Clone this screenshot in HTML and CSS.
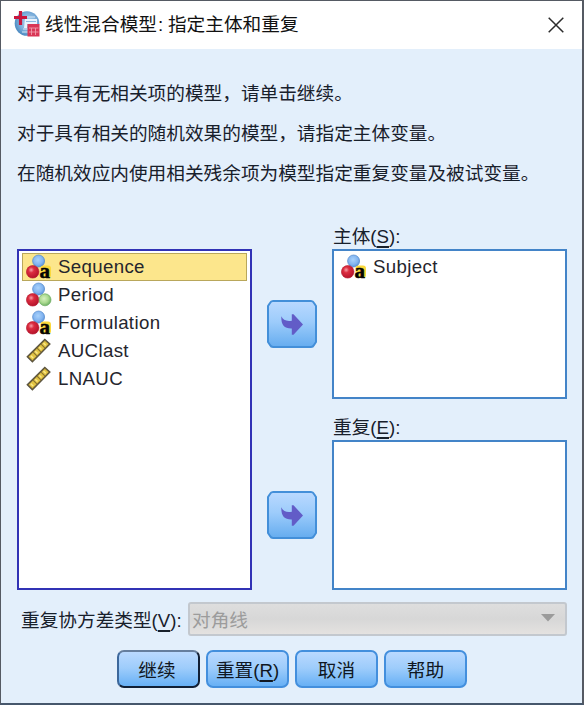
FILE: index.html
```html
<!DOCTYPE html>
<html lang="zh-CN">
<head>
<meta charset="utf-8">
<title>线性混合模型: 指定主体和重复</title>
<link rel="stylesheet" href="styles.css">
</head>
<body>
<svg class="defs" width="0" height="0" aria-hidden="true">
  <defs>
    <radialGradient id="blue" cx=".45" cy=".4" r=".6"><stop offset="0" stop-color="#a9d2fb"/><stop offset=".65" stop-color="#83b5f0"/><stop offset="1" stop-color="#5b94dc"/></radialGradient>
    <radialGradient id="red" cx=".38" cy=".35" r=".65"><stop offset="0" stop-color="#f5a0a8"/><stop offset=".35" stop-color="#dc2c40"/><stop offset="1" stop-color="#b5142b"/></radialGradient>
    <radialGradient id="green" cx=".42" cy=".4" r=".6"><stop offset="0" stop-color="#d7f1c0"/><stop offset=".6" stop-color="#aad98f"/><stop offset="1" stop-color="#6fb064"/></radialGradient>
    <radialGradient id="globe" cx=".55" cy=".45" r=".6"><stop offset="0" stop-color="#b5d5ef"/><stop offset=".6" stop-color="#7caedb"/><stop offset="1" stop-color="#4484bc"/></radialGradient>
    <symbol id="balls" viewBox="0 0 26 26">
      <circle cx="12.6" cy="7" r="6" fill="url(#blue)" stroke="#5389cc" stroke-width=".7"/>
      <circle cx="6.7" cy="17.8" r="6.3" fill="url(#red)" stroke="#b5162b" stroke-width=".6"/>
    </symbol>
    <symbol id="string" viewBox="0 0 26 26">
      <use href="#balls" width="26" height="26"/>
      <rect x="14.5" y="11.5" width="10.5" height="12.5" rx="3" fill="#fbd83b"/>
      <text x="13.6" y="24" class="glyph-a">a</text>
    </symbol>
    <symbol id="nominal" viewBox="0 0 26 26">
      <use href="#balls" width="26" height="26"/>
      <circle cx="19" cy="17.8" r="6" fill="url(#green)" stroke="#6dac60" stroke-width=".7"/>
    </symbol>
    <symbol id="scale" viewBox="0 0 26 26">
      <path d="M1.2 18.8 18.8 1.4 24 6 6.4 23.8Z" fill="#8a7330" stroke="#5b543f" stroke-width="1.2"/>
      <path d="M2.8 18.8 6.9 14.7 10.4 18.2 6.4 22.2ZM7.7 13.9 10.9 10.7 14.4 14.2 11.2 17.4ZM11.7 9.9 14.9 6.7 18.4 10.2 15.2 13.4ZM15.7 5.9 18.9 2.9 22.4 6.1 19.2 9.4Z" fill="#e3c544"/>
      <path d="M4.8 17.7l2.4 2.4M9.3 13.2l2.2 2.2M13.3 9.2l2.2 2.2M17.5 5l2.2 2.2" stroke="#fae98c" stroke-width="1.4"/>
    </symbol>
    <linearGradient id="face" x2="0" y2="1"><stop offset="0" stop-color="#bad9ff"/><stop offset=".45" stop-color="#9dccfb"/><stop offset="1" stop-color="#65acef"/></linearGradient>
    <symbol id="move" viewBox="0 0 50 48">
      <path d="M6 1H44Q46 1 47 3L49 6V42L47 45Q46 47 44 47H6Q4 47 3 45L1 42V6L3 3Q4 1 6 1Z" fill="url(#face)" stroke="#438fd9" stroke-width="2" stroke-linejoin="round"/>
      <path d="M14.3 16.3C16 20.2 19.3 21.5 24.8 20.7V14.3H26.5L36 24.5 26.5 34.8H24.8V28.5C17.6 28.7 14 25.5 14.3 16.3Z" fill="#625cc7"/>
    </symbol>
  </defs>
</svg>
<div class="window">
  <header class="titlebar">
    <svg class="app-icon" viewBox="0 0 28 28">
      <circle cx="14" cy="13.5" r="12.3" fill="url(#globe)"/>
      <path d="M12 7h10M10 19h5M9 22h6" stroke="#d5e7f6" stroke-width="1.2"/>
      <path d="M12 9h12v5H14v4h-3Z" fill="#e9f3fc"/>
      <path d="M13 11.5h10" stroke="#8bb8df" stroke-width="1"/>
      <path d="M7.5 1V15M1 7.5H14" stroke="#c9153d" stroke-width="3.2"/>
      <path d="M14.5 14H26.5V26.5H14.5Z" fill="#d93655"/>
      <path d="M16 18h9.500M16 22h9.500M18.500 18v7M22.500 18v7" stroke="#f09bac" stroke-width=".9"/>
    </svg>
    <h1 class="title">线性混合模型<span class="colon">:</span>指定主体和重复</h1>
    <svg class="close" viewBox="0 0 16 16"><path d="M.7.7 15.3 15.3M15.3.7.7 15.3" stroke="#2b2b2b" stroke-width="1.5"/></svg>
  </header>
  <main class="content">
    <div class="messages">
      <p>对于具有无相关项的模型，请单击继续。</p>
      <p>对于具有相关的随机效果的模型，请指定主体变量。</p>
      <p>在随机效应内使用相关残余项为模型指定重复变量及被试变量。</p>
    </div>
    <div class="picker">
      <ul class="box source">
        <li class="row selected"><svg><use href="#string"/></svg>Sequence</li>
        <li class="row"><svg><use href="#nominal"/></svg>Period</li>
        <li class="row"><svg><use href="#string"/></svg>Formulation</li>
        <li class="row"><svg><use href="#scale"/></svg>AUClast</li>
        <li class="row"><svg><use href="#scale"/></svg>LNAUC</li>
      </ul>
      <div class="targets">
        <div class="target">
          <svg class="move"><use href="#move"/></svg>
          <div class="field">
            <div class="label">主体(<u>S</u>):</div>
            <ul class="box"><li class="row"><svg><use href="#string"/></svg>Subject</li></ul>
          </div>
        </div>
        <div class="target">
          <svg class="move"><use href="#move"/></svg>
          <div class="field">
            <div class="label">重复(<u>E</u>):</div>
            <ul class="box"></ul>
          </div>
        </div>
      </div>
    </div>
    <div class="covariance">
      <div class="label">重复协方差类型(<u>V</u>):</div>
      <div class="combo"><span>对角线</span><svg viewBox="0 0 14 8"><path d="M0 0H14L7 7.5Z" fill="#9b9b9b"/></svg></div>
    </div>
    <div class="buttons">
      <div class="button default"><span>继续</span></div>
      <div class="button"><span>重置(<u>R</u>)</span></div>
      <div class="button"><span>取消</span></div>
      <div class="button"><span>帮助</span></div>
    </div>
  </main>
</div>
</body>
</html>
```
FILE: styles.css
```css
* { box-sizing: border-box; }
body { margin: 0; font: 18.67px/28px "Liberation Sans", "Noto Sans CJK SC", sans-serif; color: #18202b; }
h1, p, ul { margin: 0; padding: 0; }
ul { list-style: none; }
svg { display: block; flex: none; }
.defs { position: absolute; }
.window { width: 584px; height: 705px; border: 1px solid #555a63; border-right-width: 2px; border-bottom: 2px solid #46576c; background: #e3effb; overflow: hidden; }
.titlebar { display: flex; align-items: center; height: 48px; padding: 0 18px 0 12px; background: #fff; }
.app-icon { width: 28px; height: 28px; margin-top: -2px; }
.title { flex: 1; margin-left: 4px; font-size: 18.67px; font-weight: 400; color: #111; white-space: nowrap; }
.colon { display: inline-block; width: 11px; padding-left: 1px; }
.close { width: 16px; height: 16px; }
.content { padding: 0 15px 0 16px; }
.messages { padding-top: 31px; height: 176px; white-space: nowrap; }
.messages p { height: 40px; }
.picker { display: flex; gap: 15px; align-items: flex-end; height: 365px; }
.box { border: 2px solid #4384c8; background: #fff; padding: 2px 3px; }
.source { flex: none; width: 235px; height: 341px; border-color: #3132b5; }
.row { display: flex; align-items: center; height: 28px; padding-left: 3px; gap: 6px; letter-spacing: .35px; border: 1px solid transparent; color: #25252d; }
.row svg { width: 26px; height: 26px; }
.selected { background: #fce68c; border-color: #b9a75b; }
.glyph-a { font: bold 21px "Liberation Serif", serif; fill: #050505; stroke: #050505; stroke-width: .5px; letter-spacing: 0; }
.targets { display: flex; flex: none; flex-direction: column; gap: 17px; height: 365px; }
.target { display: flex; gap: 15px; height: 174px; }
.move { width: 50px; height: 48px; margin-top: 75px; }
.field { width: 235px; }
.field .label { height: 24px; line-height: 24px; padding-left: 1px; }
.field .box { height: 150px; }
.label { white-space: nowrap; }
.label u, .button u { text-decoration-thickness: 1.5px; text-underline-offset: 3px; }
.covariance { display: flex; align-items: center; justify-content: space-between; height: 34px; margin-top: 12px; padding-left: 4px; }
.covariance .label { padding-top: 3px; }
.combo { display: flex; align-items: center; justify-content: space-between; width: 379px; height: 34px; padding: 3px 10px 0 2px; border: 2px solid #c3c8ce; border-radius: 3px; background: linear-gradient(#dedede, #d7d7d7 50%, #e4e2e0); color: #9c9c9c; }
.combo svg { width: 14px; height: 8px; margin-top: -6px; }
.buttons { display: flex; gap: 6px; margin: 14px 0 0 100px; }
.button { display: flex; justify-content: center; align-items: center; width: 83px; height: 38px; padding-top: 4px; border: 2px solid #438fdd; border-radius: 7px; background: linear-gradient(#bad9ff, #9dccfb 48%, #67b0f5); color: #101722; white-space: nowrap; }
.default { padding-right: 3px; border-color: #667e9e #111f35 #111f35 #3c679b; }
```
